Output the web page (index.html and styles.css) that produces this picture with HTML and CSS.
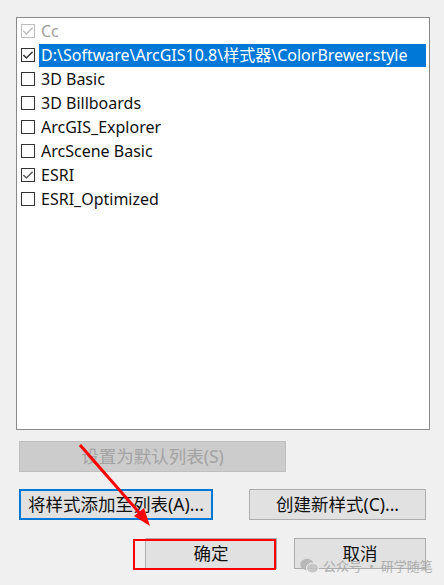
FILE: index.html
```html
<!DOCTYPE html>
<html>
<head>
<meta charset="utf-8">
<link rel="stylesheet" href="styles.css">
</head>
<body>
<div class="dialog">
  <div class="listbox">
    <div class="item disabled">
      <span class="cb checked"><svg viewBox="0 0 13 13"><path d="M1.5 6.5 L4.8 9.8 L11.5 3" /></svg></span>
      <span class="label">Cc</span>
    </div>
    <div class="item">
      <span class="cb checked"><svg viewBox="0 0 13 13"><path d="M1.5 6.5 L4.8 9.8 L11.5 3" /></svg></span>
      <span class="label selected">D:\Software\ArcGIS10.8\样式器\ColorBrewer.style</span>
    </div>
    <div class="item"><span class="cb"></span><span class="label">3D Basic</span></div>
    <div class="item"><span class="cb"></span><span class="label">3D Billboards</span></div>
    <div class="item"><span class="cb"></span><span class="label">ArcGIS_Explorer</span></div>
    <div class="item"><span class="cb"></span><span class="label">ArcScene Basic</span></div>
    <div class="item">
      <span class="cb checked soft"><svg viewBox="0 0 13 13"><path d="M1.5 6.5 L4.8 9.8 L11.5 3" /></svg></span>
      <span class="label">ESRI</span>
    </div>
    <div class="item"><span class="cb"></span><span class="label">ESRI_Optimized</span></div>
  </div>

  <div class="row row-default">
    <button class="btn btn-disabled">设置为默认列表(S)</button>
  </div>
  <div class="row row-add">
    <button class="btn btn-focus">将样式添加至列表(A)...</button>
    <button class="btn btn-create">创建新样式(C)...</button>
  </div>
  <div class="row row-ok">
    <button class="btn btn-ok">确定</button>
    <button class="btn btn-cancel">取消</button>
  </div>
</div>

<div class="highlight-box"></div>

<svg class="arrow" width="444" height="585" viewBox="0 0 444 585">
  <line x1="80" y1="445" x2="143" y2="517" stroke="#ff0000" stroke-width="3" />
  <polygon points="150,526 134,516 144,508" fill="#ff0000" />
</svg>

<div class="watermark">
  <svg class="wx" width="19" height="16" viewBox="0 0 19 16">
    <ellipse cx="7" cy="6.5" rx="6.8" ry="5.8" fill="#b4b4b4"/>
    <ellipse cx="12.5" cy="10" rx="6" ry="5" fill="#c4c4c4" stroke="#f0f0f0" stroke-width="1"/>
  </svg>
  <span class="wm-text">公众号 · 研学随笔</span>
</div>
</body>
</html>
```

FILE: styles.css
```css
* { box-sizing: border-box; }

html, body {
  margin: 0;
  padding: 0;
  background: #f0f0f0;
  width: 444px;
  height: 585px;
  overflow: hidden;
  font-family: "Noto Sans", "Noto Sans CJK SC", sans-serif;
}

.dialog {
  padding: 17px 0 0 16px;
  position: relative;
}

.listbox {
  width: 414px;
  height: 413px;
  background: #ffffff;
  border: 1px solid #8a8a8a;
  padding-top: 1px;
}

.item {
  height: 24px;
  display: flex;
  align-items: center;
  font-size: 16px;
  color: #111;
}

.cb {
  width: 14px;
  height: 14px;
  margin-left: 4px;
  border: 1px solid #333333;
  background: #fff;
  flex: none;
  position: relative;
}

.cb svg {
  position: absolute;
  left: 0;
  top: 0;
  width: 12px;
  height: 12px;
  fill: none;
  stroke: #333;
  stroke-width: 1.6;
}

.cb.soft svg { stroke: #5a5a5a; }

.disabled .cb { border-color: #bcbcbc; }
.disabled .cb svg { stroke: #bcbcbc; }
.disabled .label { color: #a0a0a0; }

.label {
  margin-left: 4px;
  padding-left: 2px;
  height: 23px;
  line-height: 23px;
  white-space: nowrap;
}

.label.selected {
  flex: 1;
  margin-right: 3px;
  background: #0078d7;
  color: #ffffff;
}

.row {
  display: flex;
}

.row-default {
  margin-top: 11px;
  padding-left: 3px;
}

.row-add {
  margin-top: 17px;
  padding-left: 3px;
}

.row-ok {
  margin-top: 18px;
  padding-left: 129px;
}

.btn {
  font-family: "Noto Sans", "Noto Sans CJK SC", sans-serif;
  font-size: 17.5px;
  height: 31px;
  background: #e1e1e1;
  border: 1px solid #adadad;
  color: #111;
  padding: 0;
  margin: 0;
  line-height: 1;
  display: flex;
  align-items: center;
  justify-content: center;
  white-space: nowrap;
}

.btn-disabled {
  width: 267px;
  background: #cccccc;
  border-color: #bfbfbf;
  color: #a3a3a3;
}

.btn-focus {
  width: 194px;
  border: 2px solid #0078d7;
}

.btn-create {
  width: 177px;
  margin-left: 36px;
}

.btn-ok {
  width: 132px;
}

.btn-cancel {
  width: 132px;
  margin-left: 17px;
}

.highlight-box {
  position: absolute;
  left: 133px;
  top: 539px;
  width: 143px;
  height: 31px;
  border: 2px solid #ff0000;
}

.arrow {
  position: absolute;
  left: 0;
  top: 0;
  pointer-events: none;
}

.watermark {
  position: absolute;
  left: 300px;
  top: 558px;
  display: flex;
  align-items: center;
  gap: 4px;
  opacity: 0.9;
}

.wm-text {
  font-family: "Noto Sans CJK SC", sans-serif;
  font-size: 13px;
  color: #a8a8a8;
  line-height: 16px;
}
```
